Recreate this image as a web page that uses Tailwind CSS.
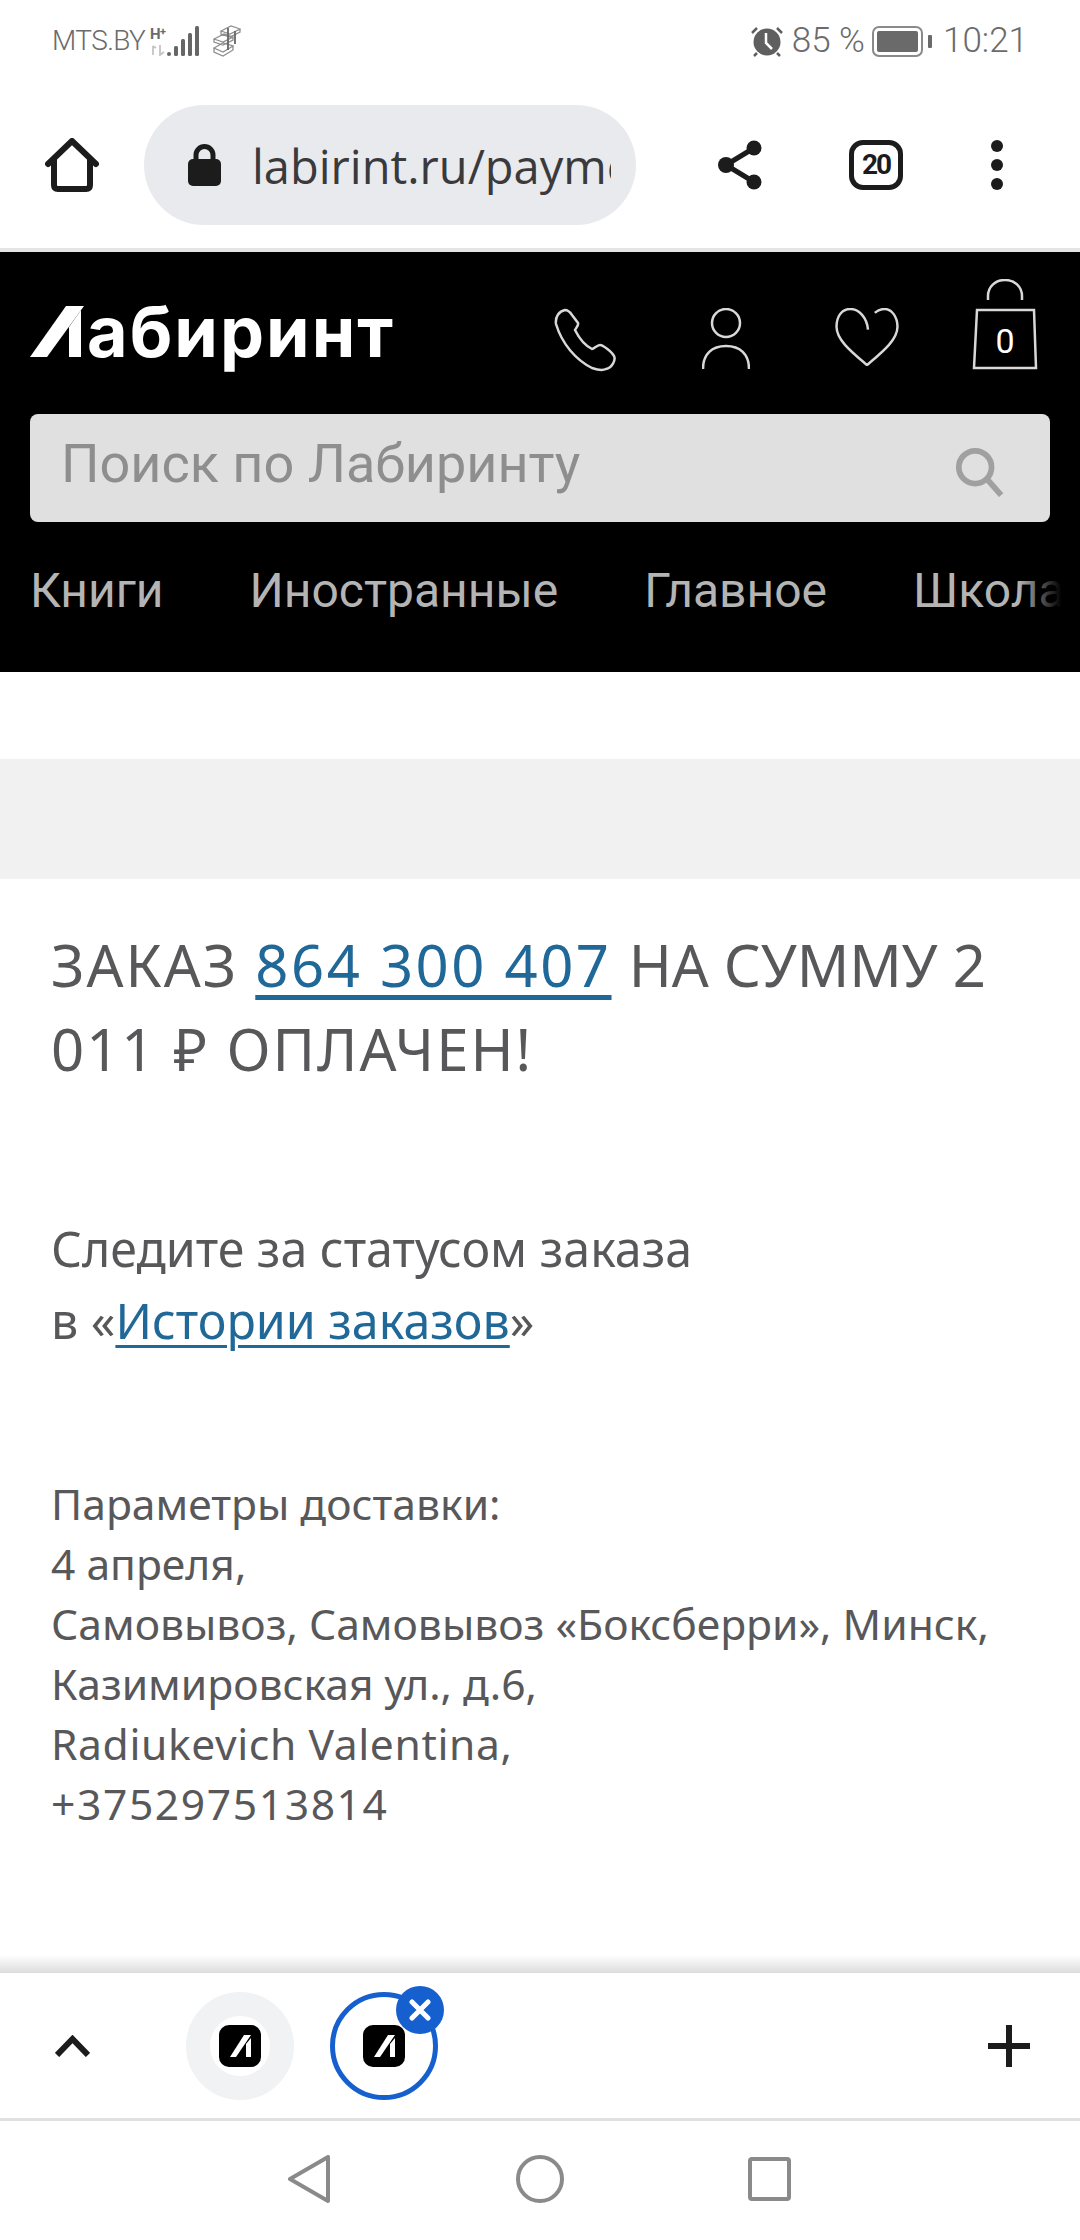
<!DOCTYPE html>
<html lang="ru">
<head>
    <meta charset="UTF-8">
    <meta name="viewport" content="width=device-width, initial-scale=1.0">
    <title>Заказ оплачен</title>
    <script src="https://cdn.jsdelivr.net/npm/@tailwindcss/browser@4"></script>
</head>
<body class="bg-white">
    <div class="w-[1080px] h-[2240px] flex flex-col overflow-hidden font-[Roboto,sans-serif]">

        <!-- status bar -->
        <div class="h-[82px] shrink-0 flex items-center text-[#6b6b6b]">
            <span class="ml-[52px] w-[90px] text-[28px] font-light tracking-[-0.6px] whitespace-nowrap">MTS.BY</span>
            <svg class="ml-[8px]" width="50" height="30" viewBox="0 0 50 30">
                <text x="0" y="13" font-size="15" font-weight="700" fill="#6b6b6b" font-family="Roboto">H</text>
                <text x="10" y="9" font-size="11" font-weight="700" fill="#6b6b6b" font-family="Roboto">+</text>
                <path d="M3 20v9M6 22l-3-2M10 19v10l4-3" stroke="#c4c4c4" stroke-width="1.800" fill="none"/>
                <rect x="17" y="26" width="4" height="4" rx="2" fill="#666"/>
                <rect x="24" y="20" width="4" height="10" rx="1.500" fill="#666"/>
                <rect x="31" y="13" width="4" height="17" rx="1.500" fill="#666"/>
                <rect x="38" y="7" width="4" height="23" rx="1.500" fill="#666"/>
                <rect x="45" y="0" width="4" height="30" rx="1.500" fill="#666"/>
            </svg>
            <svg class="ml-[13px]" width="28" height="32" viewBox="0 0 28 32" fill="none" stroke="#8f8f8f" stroke-width="1.300">
                <path d="M8 6l10-5 9 3-10 5zM8 6v3l9 3 10-5V4M1 14l10-5 9 3-10 5zM1 14v3l9 3 10-5v-3M1 23l9-5 10 3-10 6zM1 23v4l9 4 10-6v-4"/>
                <path d="M15 3v22M22 6v13" stroke="#666" stroke-width="1.800"/>
            </svg>
            <svg class="ml-auto" width="34" height="32" viewBox="0 0 34 32">
                <circle cx="17" cy="17" r="13.500" fill="#5f5f5f"/>
                <path d="M16 8v10l6 6" stroke="#fff" stroke-width="2.500" fill="none"/>
                <path d="M2 8l5-5M32 8l-5-5M4 31l3-3M30 31l-3-3" stroke="#5f5f5f" stroke-width="2.500"/>
            </svg>
            <span class="ml-[8px] text-[35px] font-light">85 %</span>
            <svg class="ml-[7px]" width="61" height="31" viewBox="0 0 61 31" fill="none">
                <rect x="1" y="1" width="49" height="29" rx="6" stroke="#8a8a8a" stroke-width="2"/>
                <rect x="5" y="5" width="41" height="21" rx="2" fill="#6a6a6a"/>
                <rect x="56" y="9" width="4" height="13" rx="1" fill="#6a6a6a"/>
            </svg>
            <span class="ml-[10px] mr-[52px] text-[35px] font-light">10:21</span>
        </div>

        <!-- browser toolbar -->
        <div class="h-[166px] shrink-0 flex items-center">
            <svg class="ml-[45px]" width="54" height="54" viewBox="0 0 54 54" fill="none" stroke="#1c1c1c" stroke-width="6" stroke-linejoin="round" stroke-linecap="round">
                <path d="M3 26 27 3l24 23M9 22v25q0 4 4 4h28q4 0 4-4V22"/>
            </svg>
            <div class="ml-[45px] w-[492px] h-[120px] rounded-full bg-[#e9eaee] flex items-center overflow-hidden">
                <svg class="ml-[44px] shrink-0" width="33" height="42" viewBox="0 0 33 42">
                    <path d="M8 17v-6a8.500 8.500 0 0 1 17 0v6" fill="none" stroke="#1c1c1c" stroke-width="5"/>
                    <rect x="0" y="15" width="33" height="27" rx="5" fill="#1c1c1c"/>
                </svg>
                <span class="ml-[31px] mt-[2px] w-[359px] overflow-hidden whitespace-nowrap text-[47px] text-[#3a3a3c] font-['Open_Sans',sans-serif]">labirint.ru/payment</span>
            </div>
            <svg class="ml-[82px]" width="44" height="50" viewBox="0 0 44 50" fill="#1c1c1c">
                <circle cx="8" cy="25" r="8"/><circle cx="36" cy="8" r="7.500"/><circle cx="36" cy="42" r="7.500"/>
                <path d="M8 25 36 8M8 25l28 17" stroke="#1c1c1c" stroke-width="5"/>
            </svg>
            <div class="ml-[87px] w-[54px] h-[50px] rounded-[14px] border-[5px] border-[#1c1c1c] flex items-center justify-center text-[28px] font-bold text-[#1c1c1c] tracking-[-2px]">20</div>
            <svg class="ml-[88px]" width="12" height="50" viewBox="0 0 12 50" fill="#1c1c1c">
                <circle cx="6" cy="6" r="6"/><circle cx="6" cy="25" r="6"/><circle cx="6" cy="44" r="6"/>
            </svg>
        </div>
        <div class="h-[4px] shrink-0 bg-[#e4e4e4]"></div>

        <!-- site header -->
        <div class="h-[420px] shrink-0 bg-black flex flex-col">
            <div class="h-[162px] shrink-0 flex items-start pl-[30px] pt-[27px]">
                <div class="mt-[27px] w-[363px] h-[51px] flex items-start whitespace-nowrap">
                    <svg class="shrink-0" width="54" height="51" viewBox="0 0 54 51" fill="#fff">
                        <polygon points="36,0 54,0 17,51 0,51"/>
                        <polygon points="51,4 51,51 39,51 39,21"/>
                    </svg>
                    <span class="ml-[3px] text-[70px] leading-[51px] font-bold tracking-[2px] text-white font-[Inter,sans-serif]">абиринт</span>
                </div>
                <svg class="ml-[161px] mt-[29px]" width="63" height="64" viewBox="0 0 63 64" fill="none" stroke="#d8d8d8" stroke-width="2.500">
                    <path d="M2 16C1 9 5 3 11 2c3 0 5 2 7 5l6 8c1 2-2 5-3 7 4 8 9 15 17 19 2 0 5-4 8-4 3 0 12 7 14 11 2 4-2 12-8 13-4 2-8 1-14-1C22 52 8 36 2 16Z"/>
                </svg>
                <svg class="ml-[85px] mt-[29px]" width="48" height="61" viewBox="0 0 48 61" fill="none" stroke="#d8d8d8" stroke-width="2.500">
                    <circle cx="24" cy="15" r="14"/>
                    <path d="M1 61c0-15 9-23 23-23s23 8 23 23"/>
                </svg>
                <svg class="ml-[85px] mt-[29px]" width="64" height="58" viewBox="0 0 64 59" fill="none" stroke="#d8d8d8" stroke-width="2.500">
                    <path d="M33 22C32 10 24 1 15 1 6 1 1 9 1 19c0 14 17 27 31 39 14-12 31-25 31-39C63 9 57 1 50 1c-4 0-7 1-10 4"/>
                </svg>
                <div class="relative ml-[73px] w-[66px] h-[92px]">
                    <svg width="66" height="92" viewBox="0 0 66 92" fill="none" stroke="#d8d8d8" stroke-width="2.500">
                        <path d="M16 21v-4C16 8 23 1 33 1s17 7 17 16v4"/>
                        <polygon points="5,31 62,31 64,89 2,89"/>
                    </svg>
                    <span class="absolute left-0 right-0 top-[42px] text-center text-[34px] leading-[40px] text-white">0</span>
                </div>
            </div>
            <div class="mx-[30px] h-[108px] shrink-0 rounded-[8px] bg-[#e0e0e0] flex items-center">
                <span class="ml-[31px] mb-[10px] text-[54px] text-[#8e8e8e]">Поиск по Лабиринту</span>
                <svg class="ml-auto mr-[46px] mt-[8px]" width="49" height="50" viewBox="0 0 49 52" fill="none" stroke="#a0a0a0" stroke-width="6">
                    <circle cx="20" cy="21" r="17"/>
                    <path d="M32 33l15 17"/>
                </svg>
            </div>
            <div class="relative flex-1 overflow-hidden">
                <div class="flex pl-[30px] pt-[39px] gap-[86px] text-[48px] leading-[60px] text-[#b4b4b4] whitespace-nowrap">
                    <span>Книги</span>
                    <span>Иностранные</span>
                    <span>Главное</span>
                    <span>Школа</span>
                </div>
                <div class="absolute top-0 bottom-0 right-0 w-[62px] bg-linear-to-r from-transparent to-black to-70%"></div>
            </div>
        </div>

        <!-- page content -->
        <div class="flex-1 min-h-0 overflow-hidden text-[#58585a] font-['Noto_Sans',sans-serif]">
            <div class="mt-[87px] h-[120px] bg-[#f1f1f1]"></div>
            <h1 class="ml-[51px] mt-[44px] text-[58px] leading-[84px] font-normal tracking-[2px] whitespace-nowrap">
                ЗАКАЗ <a class="text-[#1f6898] tracking-[2.5px] underline decoration-[5px] underline-offset-[8px]">864 300 407</a> <span class="tracking-[0px]">НА СУММУ 2</span><br>011 ₽ ОПЛАЧЕН!
            </h1>
            <p class="ml-[51px] mt-[121px] text-[48.3px] leading-[72px]">
                Следите за статусом заказа<br>в «<a class="text-[#1f6898] underline decoration-[3px] underline-offset-[6px]">Истории заказов</a>»
            </p>
            <p class="ml-[51px] mt-[117px] text-[42.6px] leading-[60px]">
                Параметры доставки:<br>4 апреля,<br>Самовывоз, Самовывоз «Боксберри», Минск,<br>Казимировская ул., д.6,<br><span class="tracking-[0.6px]">Radiukevich Valentina,</span><br><span class="tracking-[1.6px]">+375297513814</span>
            </p>
        </div>

        <!-- tab strip -->
        <div class="h-[18px] shrink-0 bg-linear-to-b from-white to-[#dcdcdc]"></div>
        <div class="h-[145px] shrink-0 flex items-center">
            <svg class="ml-[55px]" width="35" height="22" viewBox="0 0 35 22" fill="none" stroke="#1c1c1c" stroke-width="6">
                <path d="M2 20 17.500 4 33 20"/>
            </svg>
            <div class="ml-[96px] w-[108px] h-[108px] rounded-full border-[24px] border-[#f1f2f4] bg-white flex items-center justify-center">
                <div class="w-[42px] h-[42px] shrink-0 rounded-[10px] bg-black flex items-center justify-center">
                    <svg width="21" height="22" viewBox="0 0 21 22" fill="#fff">
                        <polygon points="14,0 21,0 6,22 0,22"/>
                        <polygon points="16,9 21,3 21,22 16,22"/>
                    </svg>
                </div>
            </div>
            <div class="relative ml-[36px] w-[108px] h-[108px] rounded-full border-[5px] border-[#1560ce] bg-white flex items-center justify-center">
                <div class="w-[42px] h-[42px] shrink-0 rounded-[10px] bg-black flex items-center justify-center">
                    <svg width="21" height="22" viewBox="0 0 21 22" fill="#fff">
                        <polygon points="14,0 21,0 6,22 0,22"/>
                        <polygon points="16,9 21,3 21,22 16,22"/>
                    </svg>
                </div>
                <div class="absolute top-[-11px] right-[-11px] w-[48px] h-[48px] rounded-full bg-[#1560ce] flex items-center justify-center">
                    <svg width="22" height="22" viewBox="0 0 22 22" stroke="#fff" stroke-width="5" stroke-linecap="round">
                        <path d="M3 3l16 16M19 3 3 19"/>
                    </svg>
                </div>
            </div>
            <svg class="ml-auto mr-[50px]" width="42" height="42" viewBox="0 0 42 42" fill="#1c1c1c">
                <rect x="18" y="0" width="6" height="42"/>
                <rect x="0" y="18" width="42" height="6"/>
            </svg>
        </div>
        <div class="h-[3px] shrink-0 bg-[#e0e0e0]"></div>

        <!-- android nav -->
        <div class="h-[119px] shrink-0 flex items-center pb-[3px]">
            <svg class="ml-[288px]" width="43" height="48" viewBox="0 0 43 48" fill="none" stroke="#8a8a8a" stroke-width="4" stroke-linejoin="round">
                <path d="M40 2v44L2 24Z"/>
            </svg>
            <svg class="ml-[185px]" width="48" height="48" viewBox="0 0 48 48" fill="none" stroke="#8a8a8a" stroke-width="4">
                <circle cx="24" cy="24" r="22"/>
            </svg>
            <svg class="ml-[184px]" width="43" height="44" viewBox="0 0 43 44" fill="none" stroke="#8a8a8a" stroke-width="4" stroke-linejoin="round">
                <rect x="2" y="2" width="39" height="40" rx="2"/>
            </svg>
        </div>
    </div>
</body>
</html>
